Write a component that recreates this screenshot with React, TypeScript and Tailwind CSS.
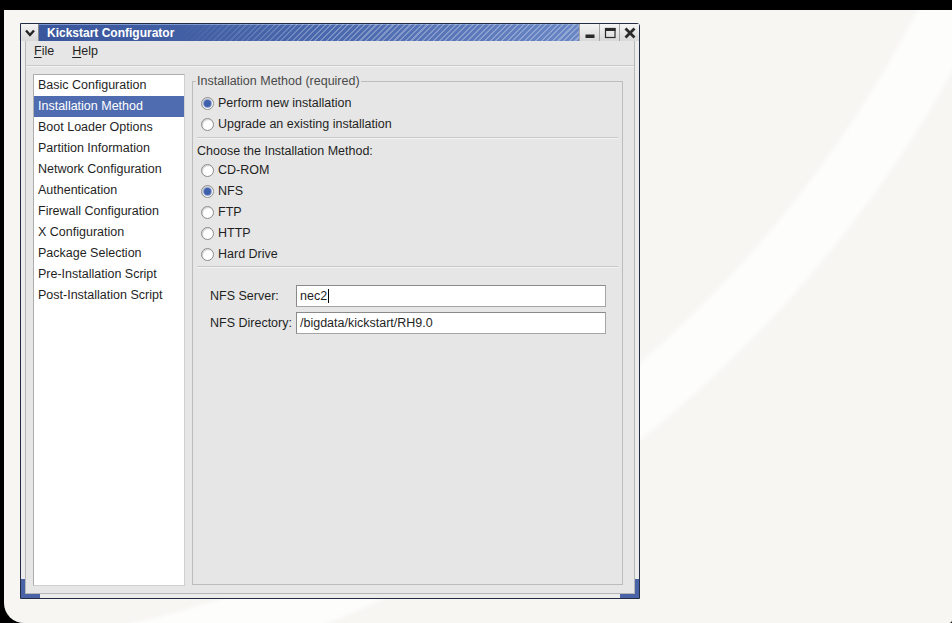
import React from "react";

const sections = [
  "Basic Configuration",
  "Installation Method",
  "Boot Loader Options",
  "Partition Information",
  "Network Configuration",
  "Authentication",
  "Firewall Configuration",
  "X Configuration",
  "Package Selection",
  "Pre-Installation Script",
  "Post-Installation Script",
];

const methods = [
  { label: "CD-ROM", checked: false },
  { label: "NFS", checked: true },
  { label: "FTP", checked: false },
  { label: "HTTP", checked: false },
  { label: "Hard Drive", checked: false },
];

const Radio = ({ checked }: { checked?: boolean }) => (
  <span className="flex h-[13px] w-[13px] items-center justify-center rounded-full border border-[#8a8a8a] bg-white shadow-[inset_1px_1px_1px_rgba(0,0,0,0.18)]">
    {checked && <span className="h-[7px] w-[7px] rounded-full bg-[#3f5fab] shadow-[0_0_0_1px_#8ea3d3]" />}
  </span>
);

const RadioRow = ({ label, checked }: { label: string; checked?: boolean }) => (
  <div className="flex h-[21px] items-center gap-[4px] pl-[4px]">
    <Radio checked={checked} />
    <span>{label}</span>
  </div>
);

const Separator = () => (
  <div className="h-[2px] border-t border-b border-t-[#c9c9c9] border-b-[#f3f3f3]" />
);

const TitleButton = ({ children }: { children: React.ReactNode }) => (
  <div className="flex w-[20px] items-center justify-center border-l border-[#a6a6a6] bg-[linear-gradient(180deg,#f4f4f4,#d9d9d9)]">
    {children}
  </div>
);

const TitleBar = () => (
  <div className="flex h-[17px]">
    <div className="flex w-[18px] items-center justify-center border-r border-[#8b8b8b] bg-[linear-gradient(180deg,#f4f4f4,#d9d9d9)]">
      <svg width="10" height="8" viewBox="0 0 10 8">
        <polyline points="1,1.5 5,6 9,1.5" fill="none" stroke="#252525" strokeWidth="2.4" />
      </svg>
    </div>
    <div className="flex flex-1 items-center bg-[linear-gradient(90deg,#3a569c,#4a68ad_55%,#6986c5)] shadow-[inset_0_1px_0_#7d97cf]">
      <span className="pl-[8px] text-[12px] font-bold leading-none text-white">Kickstart Configurator</span>
      <div className="ml-[4px] h-full flex-1 bg-[repeating-linear-gradient(135deg,rgba(255,255,255,0.28)_0px,rgba(255,255,255,0.28)_1.5px,transparent_1.5px,transparent_4px)] [mask-image:linear-gradient(90deg,transparent,black_35%)]" />
    </div>
    <TitleButton>
      <svg width="12" height="12" viewBox="0 0 12 12">
        <rect x="1.5" y="7.5" width="9" height="3.5" fill="#2a2a2a" />
      </svg>
    </TitleButton>
    <TitleButton>
      <svg width="12" height="12" viewBox="0 0 12 12">
        <rect x="1.5" y="1.5" width="9.5" height="9" fill="none" stroke="#2a2a2a" strokeWidth="1.2" />
        <rect x="1" y="1" width="10.5" height="3" fill="#2a2a2a" />
      </svg>
    </TitleButton>
    <TitleButton>
      <svg width="12" height="12" viewBox="0 0 12 12">
        <path d="M1.5 1.5 L10.5 10.5 M10.5 1.5 L1.5 10.5" stroke="#2a2a2a" strokeWidth="2.8" />
      </svg>
    </TitleButton>
  </div>
);

const Sidebar = () => (
  <div className="h-[512px] w-[152px] border border-[#aeaeae] border-r-[#cfcfcf] border-b-[#cfcfcf] bg-white text-[#1f1f1f]">
    {sections.map((s) => (
      <div
        key={s}
        className={
          s === "Installation Method"
            ? "flex h-[21px] items-center bg-[#4f6cb0] pl-[4px] text-white"
            : "flex h-[21px] items-center pl-[4px]"
        }
      >
        {s}
      </div>
    ))}
  </div>
);

const TextField = ({ value, caret }: { value: string; caret?: boolean }) => (
  <div className="flex h-[22px] w-[310px] items-center border border-[#a5a5a5] border-t-[#8a8a8a] border-l-[#8a8a8a] bg-white pl-[3px] text-[#1f1f1f]">
    <span>{value}</span>
    {caret && <span className="ml-[1px] h-[14px] w-[1px] bg-black" />}
  </div>
);

const MethodPanel = () => (
  <fieldset className="m-0 h-[511px] w-[431px] border border-[#bcbcbc] p-0">
    <legend className="ml-[3px] px-[1px] leading-[15px] text-[#4a4a4a]">Installation Method (required)</legend>
    <div className="px-[4px] pt-[4px] text-[#1f1f1f]">
      <RadioRow label="Perform new installation" checked />
      <RadioRow label="Upgrade an existing installation" />
      <div className="mt-[2px]">
        <Separator />
      </div>
      <div className="mt-[3px] flex h-[18px] items-center">Choose the Installation Method:</div>
      {methods.map((m) => (
        <RadioRow key={m.label} label={m.label} checked={m.checked} />
      ))}
      <div className="mt-[1px]">
        <Separator />
      </div>
      <div className="mt-[17px] grid grid-cols-[86px_310px] items-center gap-y-[5px] pl-[13px]">
        <span>NFS Server:</span>
        <TextField value="nec2" caret />
        <span>NFS Directory:</span>
        <TextField value="/bigdata/kickstart/RH9.0" />
      </div>
    </div>
  </fieldset>
);

const FrameSide = () => (
  <div className="flex w-[4px] flex-col">
    <div className="flex-1" />
    <div className="h-[15px] bg-[#4963a6]" />
  </div>
);

const Window = () => (
  <div className="flex h-[576px] w-[620px] flex-col rounded-tr-[3px] border border-[#222c45] bg-[#ececec] text-[12.5px]">
    <TitleBar />
    <div className="flex flex-1">
      <FrameSide />
      <div className="flex flex-1 flex-col border-x border-b border-[#b7b7b7] bg-[#e6e6e6]">
        <div className="flex h-[24px] items-start pl-[8px] pt-[3px] leading-[15px] text-[#1f1f1f]">
          <span>
            <span className="underline underline-offset-2">F</span>ile
          </span>
          <span className="ml-[18px]">
            <span className="underline underline-offset-2">H</span>elp
          </span>
        </div>
        <Separator />
        <div className="flex gap-[7px] pl-[7px] pr-[11px] pt-[7px]">
          <Sidebar />
          <MethodPanel />
        </div>
      </div>
      <FrameSide />
    </div>
    <div className="flex h-[4px]">
      <div className="w-[19px] bg-[#4963a6]" />
      <div className="flex-1" />
      <div className="w-[19px] bg-[#4963a6]" />
    </div>
  </div>
);

export default function App() {
  return (
    <div className="h-[623px] w-[952px] overflow-hidden bg-black pl-[4px] pt-[10px] font-['Liberation_Sans',Arial,sans-serif]">
      <div className="h-[613px] w-[948px] rounded-bl-[20px] rounded-br-[3px] bg-[#f7f6f3] bg-[radial-gradient(circle_at_-148px_-550px,#f7f6f3_1193px,#fdfdfc_1199px,#fdfdfc_1252px,#f7f6f3_1258px)] pl-[16px] pt-[13px]">
        <Window />
      </div>
    </div>
  );
}
